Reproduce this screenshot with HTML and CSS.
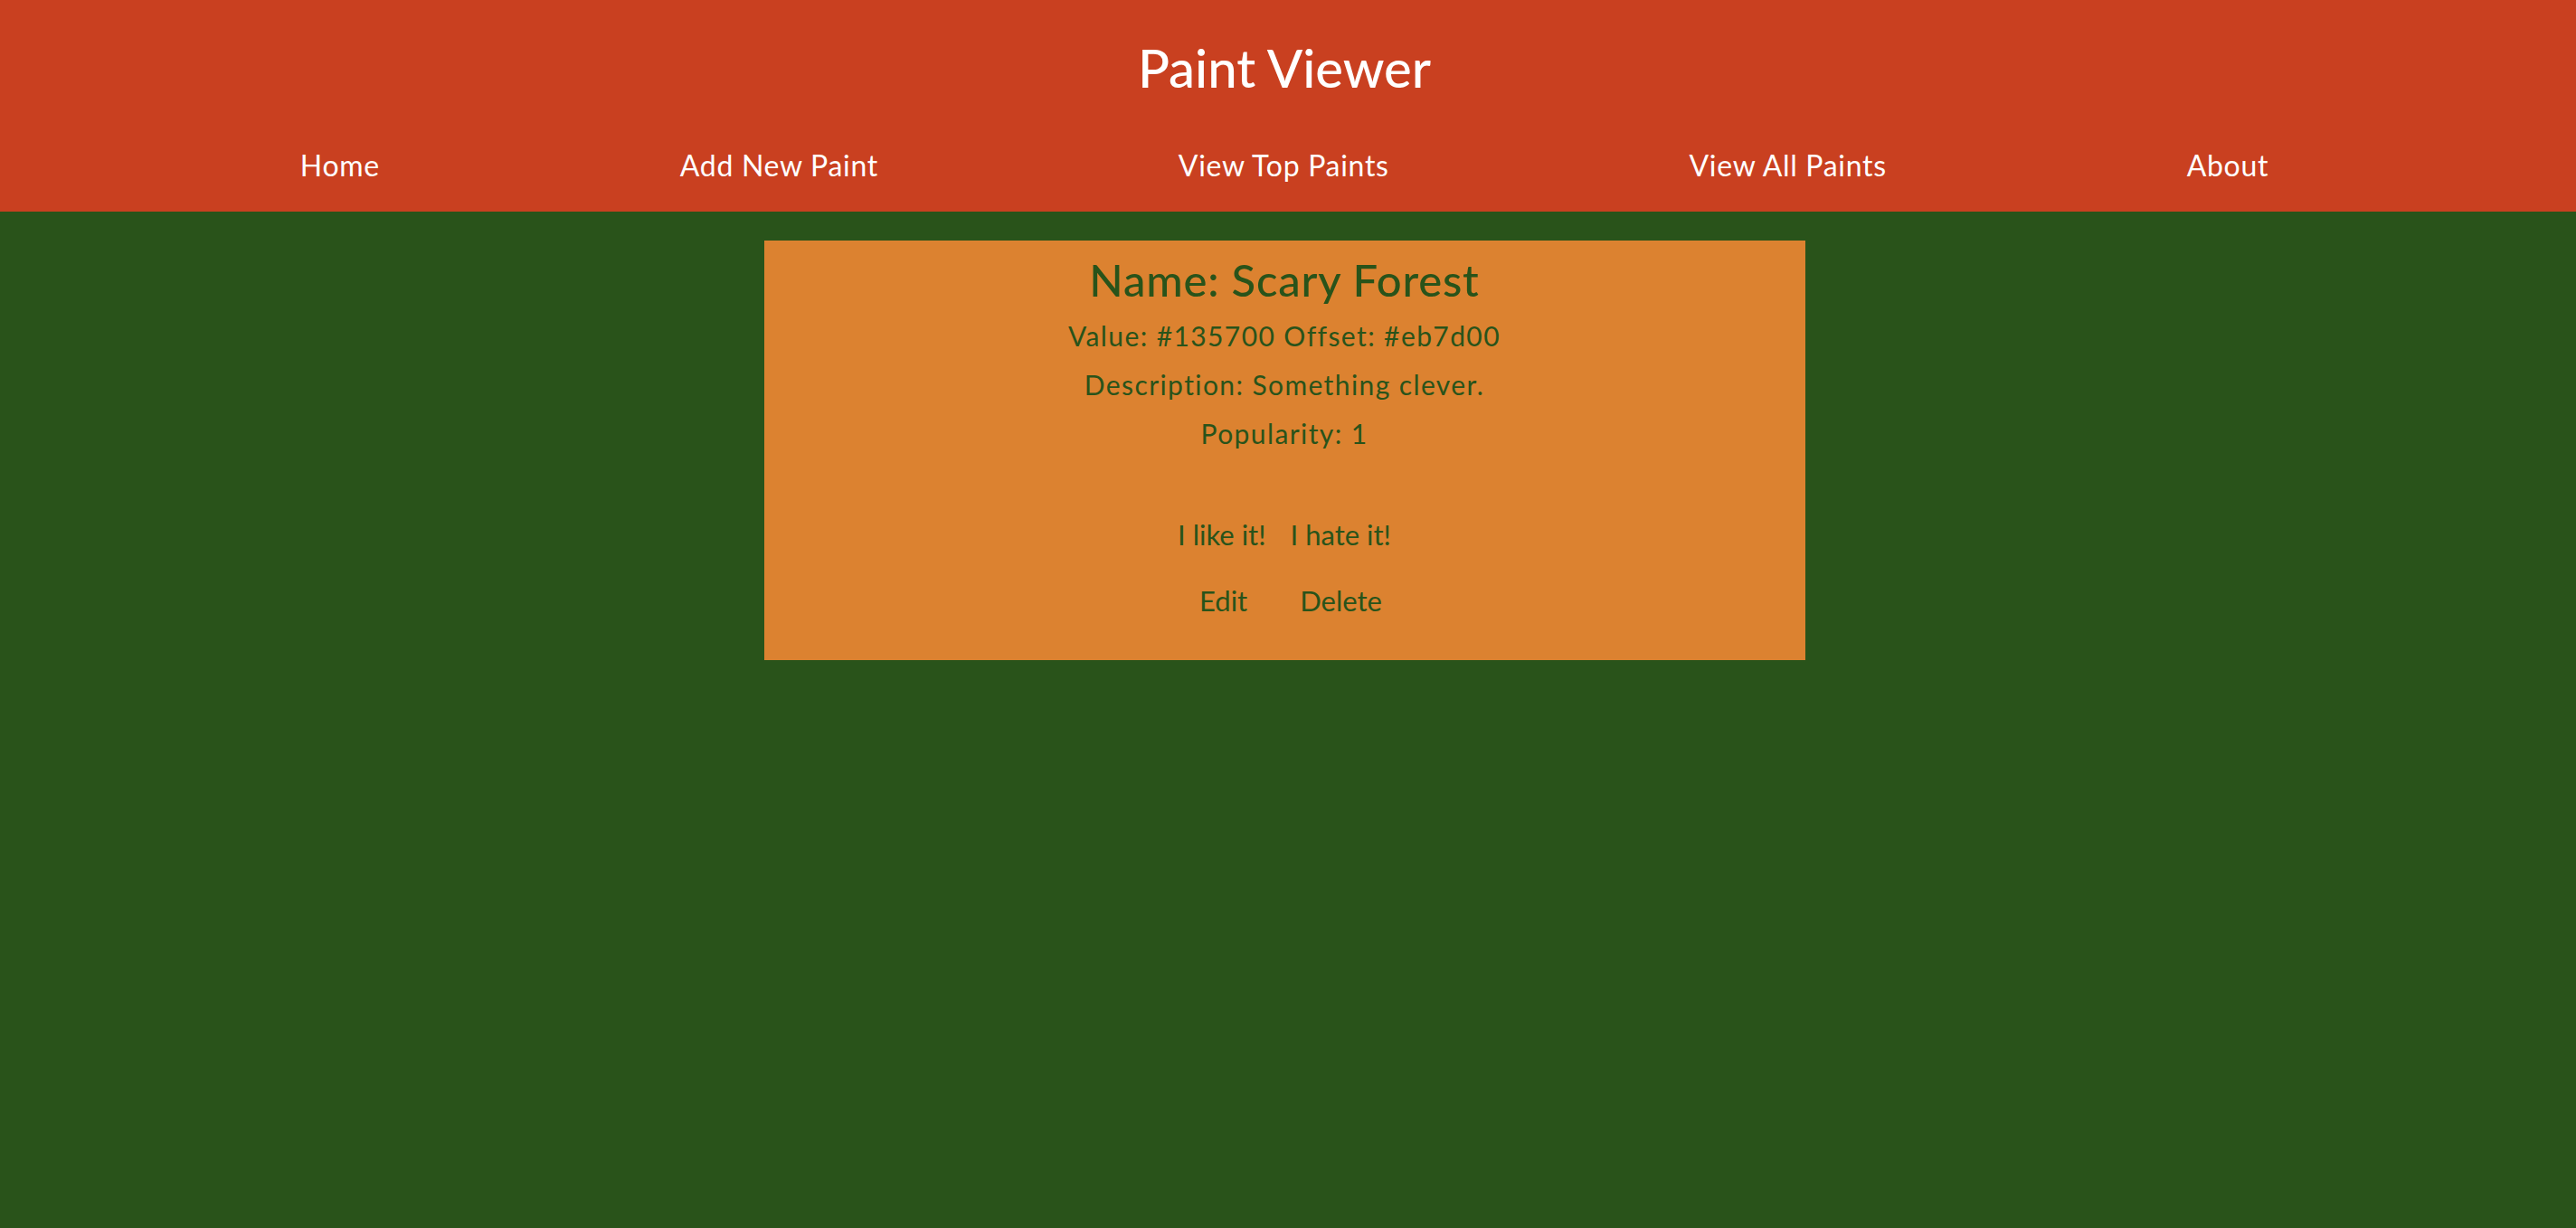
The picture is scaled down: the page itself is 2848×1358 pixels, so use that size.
FILE: index.html
```html
<!DOCTYPE html>
<html lang="en">
<head>
<meta charset="utf-8">
<title>Paint Viewer</title>
<link rel="stylesheet" href="styles.css">
</head>
<body>
<header class="site-header">
  <h1 class="site-title">Paint Viewer</h1>
  <nav class="site-nav">
    <a class="nav-link" href="#">Home</a>
    <a class="nav-link" href="#">Add New Paint</a>
    <a class="nav-link" href="#">View Top Paints</a>
    <a class="nav-link" href="#">View All Paints</a>
    <a class="nav-link" href="#">About</a>
  </nav>
</header>
<main class="content">
  <section class="paint-card">
    <h2 class="paint-name">Name: Scary Forest</h2>
    <p class="paint-line">Value: #135700 Offset: #eb7d00</p>
    <p class="paint-line">Description: Something clever.</p>
    <p class="paint-line">Popularity: 1</p>
    <div class="vote-row">
      <button class="text-btn">I like it!</button>
      <button class="text-btn">I hate it!</button>
    </div>
    <div class="action-row">
      <button class="text-btn">Edit</button>
      <button class="text-btn">Delete</button>
    </div>
  </section>
</main>
</body>
</html>
```
FILE: styles.css
```css
html, body {
  margin: 0;
  padding: 0;
}
body {
  background: #29531a;
  font-family: Lato, "Open Sans", "Liberation Sans", sans-serif;
  min-height: 1358px;
}
.site-header {
  background: #c94020;
  padding: 40px 8px 31px 0;
  color: #ffffff;
}
.site-title {
  margin: 0;
  text-align: center;
  font-size: 58px;
  line-height: 70px;
  font-weight: 500;
}
.site-nav {
  margin-top: 53px;
  display: flex;
  justify-content: space-evenly;
}
.nav-link {
  color: #ffffff;
  text-decoration: none;
  font-size: 32px;
  line-height: 40px;
  letter-spacing: 0.7px;
}
.content {
  padding: 32px 8px 0 0;
  display: flex;
  justify-content: center;
}
.paint-card {
  width: 1151px;
  background: #dc8230;
  color: #29531a;
  text-align: center;
  padding: 14px 0 46px;
  box-sizing: border-box;
}
.paint-name {
  margin: 0 0 6px;
  font-size: 49px;
  line-height: 58px;
  font-weight: 500;
  letter-spacing: 0.8px;
}
.paint-line {
  margin: 0;
  font-size: 30px;
  line-height: 54px;
  letter-spacing: 1.4px;
}
.vote-row, .action-row {
  display: flex;
  justify-content: center;
}
.vote-row {
  margin-top: 65px;
  gap: 27px;
}
.action-row {
  margin-top: 33px;
  gap: 58px;
  padding-left: 14px;
}
.text-btn {
  background: none;
  border: none;
  padding: 0;
  color: #29531a;
  font-family: inherit;
  font-size: 31px;
  line-height: 40px;
  cursor: pointer;
}
```
